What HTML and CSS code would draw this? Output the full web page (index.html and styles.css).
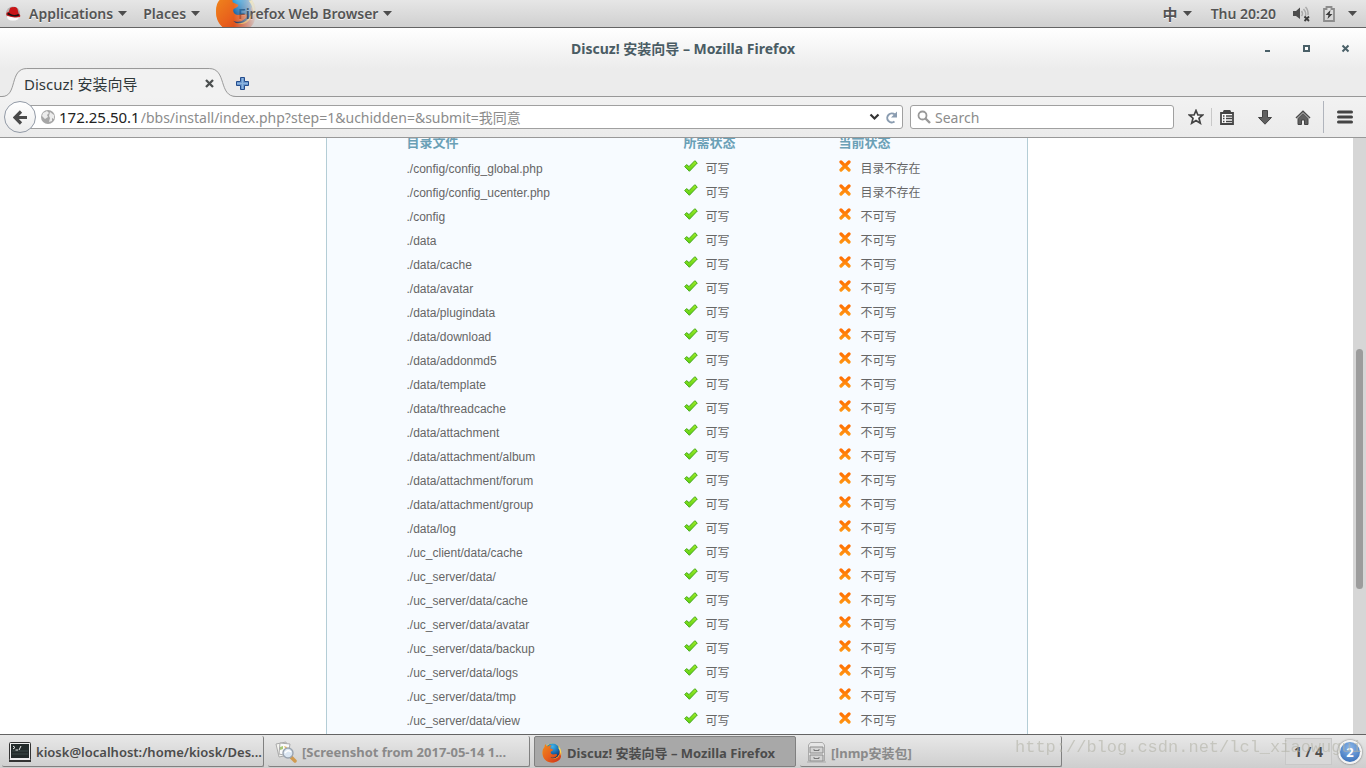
FILE: index.html
```html
<!DOCTYPE html>
<html lang="zh-CN">
<head>
<meta charset="utf-8">
<title>Discuz! 安装向导 - Mozilla Firefox</title>
<link rel="stylesheet" href="styles.css">
</head>
<body>
<svg class="defs" aria-hidden="true">
  <defs>
    <linearGradient id="gGreen" x1="0" y1="0" x2="0" y2="1"><stop offset="0" stop-color="#a0ec28"/><stop offset="1" stop-color="#5cd010"/></linearGradient>
    <linearGradient id="gOrange" gradientUnits="userSpaceOnUse" x1="0" y1="0" x2="0" y2="12"><stop offset="0" stop-color="#ff6a00"/><stop offset="1" stop-color="#ff9a14"/></linearGradient>
    <linearGradient id="gFox" x1="0" y1="0" x2="1" y2="1"><stop offset="0" stop-color="#f08a1c"/><stop offset=".5" stop-color="#e8601c"/><stop offset="1" stop-color="#c9301a"/></linearGradient>
    <linearGradient id="gTail" x1="0" y1="0" x2="0" y2="1"><stop offset="0" stop-color="#ffe24a"/><stop offset="1" stop-color="#f58a1c"/></linearGradient>
    <radialGradient id="gGlobe" cx=".5" cy=".2" r=".8"><stop offset="0" stop-color="#3fb4ea"/><stop offset=".5" stop-color="#1c70b4"/><stop offset="1" stop-color="#0b2a5c"/></radialGradient>
  </defs>
  <symbol id="ok" viewBox="0 0 14 12"><path d="M.7 6.6 2.6 4.6 5 6.6 10.8.7 13.3 3 5.4 11.3Z" fill="url(#gGreen)" stroke="#45a81c" stroke-linejoin="round"/></symbol>
  <symbol id="no" viewBox="0 0 12 12"><path d="M2 2 10 10M10 2 2 10" stroke="url(#gOrange)" stroke-width="3.2" stroke-linecap="round"/></symbol>
  <symbol id="down" viewBox="0 0 9 5"><path d="M0 0H9L4.5 5Z" fill="#4c4c4c"/></symbol>
  <symbol id="fox" viewBox="0 0 40 40">
    <circle cx="20" cy="20" r="19" fill="url(#gTail)"/>
    <circle cx="21" cy="16" r="15" fill="url(#gGlobe)"/>
    <path d="M5 8C5 5 6 3 7 2c1 3 3 4 5 5 2-2 5-3 7-2-2 2-3 4-2 6l5 2c1 1-1 3-4 4-1 1-1 3 1 5 3 2 6 0 9 0s3 3 0 5c-3 3-8 3-11 1 4 5 13 5 17-2 2-4 1-8 0-11 3 3 4 8 4 12-1 7-8 12-18 12C9 39 1 31 1 20 1 14 2 11 5 8Z" fill="url(#gFox)"/>
    <path d="M35 9c3 5 3 12 1 17 1-6 0-12-4-17Z" fill="#ffe86a"/>
  </symbol>
</svg>

<header class="panel">
  <nav class="panel-menus">
    <button class="menu menu-apps">
      <svg width="15" height="15" viewBox="0 0 15 15"><circle cx="7" cy="7.500" r="7" fill="#2a2020" opacity=".25"/><ellipse cx="7" cy="11" rx="6" ry="3.8" fill="#fafafa"/><path d="M.4 9C0 7 1 6 2.6 6L4 2.300C5 .6 7 1.600 8 1c2-.4 3 .6 3.600 2.200L12.600 7.400C14.600 8.600 14.800 10.300 13.600 11 10 12.200 2 10.800.4 9Z" fill="#c91517"/><path d="M2.800 6.600C5 9.400 9.400 9.600 12.400 8l1 1.600C9.500 11.500 3.500 9.800 1 8Z" fill="#151515"/></svg>
      <span>Applications</span><svg class="down"><use href="#down"/></svg>
    </button>
    <button class="menu menu-places"><span>Places</span><svg class="down"><use href="#down"/></svg></button>
    <button class="menu menu-app"><svg class="app-fox"><use href="#fox"/></svg><span class="app-name">Firefox Web Browser</span><svg class="down"><use href="#down"/></svg></button>
  </nav>
  <div class="panel-status">
    <button class="menu"><span class="cjk">中</span><svg class="down"><use href="#down"/></svg></button>
    <button class="menu clock">Thu 20:20</button>
    <button class="menu tray" aria-label="System">
      <svg width="17" height="16" viewBox="0 0 17 16"><path d="M0 5H3L7 1.500V13L3 10H0Z" fill="#4c4c4c"/><path d="M8.500 5q2 2.500 0 5M10.500 3q4 4.500 1 9M12.500 1q3 3 2.500 8" fill="none" stroke="#aaa" stroke-width="1.500"/><path d="M11.500 10.500 16 15M16 10.500 11.500 15" stroke="#3c3c3c" stroke-width="1.800"/></svg>
      <svg width="12" height="16" viewBox="0 0 12 16"><path d="M1 3H3.500V1H8.500V3H11V15H1Z" fill="none" stroke="#8c8c8c" stroke-width="1.800"/><path d="M7.500 4 2.500 9H5.500L4.500 13 9.500 8H6.700Z" fill="#3c3c3c"/></svg>
      <svg class="down"><use href="#down"/></svg>
    </button>
  </div>
</header>

<section class="chrome">
  <div class="titlebar">
    <h1>Discuz! 安装向导 – Mozilla Firefox</h1>
    <div class="win-buttons">
      <button aria-label="Minimize"><svg width="9" height="9"><path d="M2 7H7" stroke="#4a6068" stroke-width="2"/></svg></button>
      <button aria-label="Maximize"><svg width="9" height="9"><path d="M2 2H7V7H2Z" fill="#fff" stroke="#4a6068" stroke-width="2"/></svg></button>
      <button aria-label="Close"><svg width="9" height="9"><path d="M1.500 1.500 7.500 7.500M7.500 1.500 1.500 7.500" stroke="#4a6068" stroke-width="2"/></svg></button>
    </div>
  </div>
  <div class="tabs">
    <div class="tab">
      <svg class="tab-shape" viewBox="0 0 238 29" preserveAspectRatio="none"><path d="M0 28.500H2C18 28.500 9 1.500 27 1.500H211C229 1.500 222 28.500 238 28.500V29H0Z" fill="#f2f2f2"/><path d="M0 28.500H2C18 28.500 9 .5 27 .5H211C229 .5 220 28.500 238 28.500" fill="none" stroke="#989898"/></svg>
      <span class="tab-title">Discuz! 安装向导</span>
      <button class="tab-close" aria-label="Close tab"><svg width="9" height="9"><path d="M1 1 8 8M8 1 1 8" stroke="#4c5050" stroke-width="2.300"/></svg></button>
    </div>
    <button class="new-tab" aria-label="New tab"><svg width="13" height="13"><path d="M4.500.5H8.500V4.500H12.500V8.500H8.500V12.500H4.500V8.500H.5V4.500H4.500Z" fill="#6c9ad0" stroke="#244c8c"/><path d="M6.500 1V12M1 6.500H12" stroke="#8db4de"/></svg></button>
  </div>
</section>

<section class="toolbar">
  <div class="address">
    <button class="back" aria-label="Back"><svg width="15" height="15"><path d="M14 7.500H3M8 1.500 2 7.500 8 13.500" fill="none" stroke="#4a4a4a" stroke-width="3.200"/></svg></button>
    <svg width="14" height="14" class="globe"><circle cx="7" cy="7" r="7" fill="#a6a6a6"/><path d="M2 3 6 1 8 3 6 5 7 7 4 9 1 6ZM9 2 13 5 13 9 11 8 11 11 8 12 9 8 8 6Z" fill="#ececec"/></svg>
    <label for="url">172.25.50.1</label>
    <input id="url" type="text" value="/bbs/install/index.php?step=1&amp;uchidden=&amp;submit=我同意">
    <button aria-label="History"><svg width="11" height="8"><path d="M1.500 1.500 5.500 5.500 9.500 1.500" fill="none" stroke="#333" stroke-width="2.200"/></svg></button>
    <button aria-label="Reload"><svg width="13" height="13"><path d="M9.500 10.500A4.500 4.500 0 1 1 9.800 3.600" fill="none" stroke="#8a9cb0" stroke-width="2"/><path d="M12 .5V6.500H6Z" fill="#8a9cb0"/></svg></button>
  </div>
  <div class="search">
    <svg width="14" height="14"><circle cx="5.500" cy="5.500" r="4" fill="none" stroke="#999" stroke-width="1.800"/><path d="M8.500 8.500 13 13" stroke="#999" stroke-width="2.400"/></svg>
    <input type="search" aria-label="Search" placeholder="Search">
  </div>
  <div class="tools">
    <button class="t-star" aria-label="Bookmark"><svg width="16" height="16"><path d="M8 1.500 9.900 6H14.600L11 9.200 12.300 14.200 8 11.500 3.700 14.200 5 9.200 1.400 6H6.100Z" fill="#fafafa" stroke="#444" stroke-width="1.700"/></svg></button>
    <button class="t-list" aria-label="Bookmarks list"><svg width="14" height="15"><path d="M1 3H4V1.500H10V3H13V14H1Z" fill="#fafafa" stroke="#444" stroke-width="1.800"/><path d="M4 0H10V4H4Z" fill="#444"/><path d="M3 6H4.500M3 8.500H4.500M3 11.500H4.500M6 6H12M6 8.500H12M6 11.500H12" stroke="#444" stroke-width="1.300"/></svg></button>
    <button class="t-down" aria-label="Downloads"><svg width="14" height="15"><path d="M4.500.5H9.500V7.500H13.500L7 14.200.5 7.500H4.500Z" fill="#606060" stroke="#444"/></svg></button>
    <button class="t-home" aria-label="Home"><svg width="16" height="15"><path d="M3 8.500 8 3.500 13 8.500V14.500H9.500V10H6.500V14.500H3Z" fill="#606060" stroke="#444"/><path d="M1 8 8 1.200 15 8" fill="none" stroke="#4a4a4a" stroke-width="1.500"/></svg></button>
    <button class="t-menu" aria-label="Menu"><svg width="16" height="14"><path d="M1.500 2H14.500M1.500 7H14.500M1.500 12H14.500" stroke="#444" stroke-width="3" stroke-linecap="round"/></svg></button>
  </div>
</section>

<div class="viewport">
  <main class="page">
    <div class="card">
      <table>
        <colgroup><col class="c-file"><col class="c-need"><col></colgroup>
        <thead><tr><th>目录文件</th><th>所需状态</th><th>当前状态</th></tr></thead>
        <tbody>
          <tr><td>./config/config_global.php</td><td><svg class="ok"><use href="#ok"/></svg>可写</td><td><svg class="no"><use href="#no"/></svg>目录不存在</td></tr>
          <tr><td>./config/config_ucenter.php</td><td><svg class="ok"><use href="#ok"/></svg>可写</td><td><svg class="no"><use href="#no"/></svg>目录不存在</td></tr>
          <tr><td>./config</td><td><svg class="ok"><use href="#ok"/></svg>可写</td><td><svg class="no"><use href="#no"/></svg>不可写</td></tr>
          <tr><td>./data</td><td><svg class="ok"><use href="#ok"/></svg>可写</td><td><svg class="no"><use href="#no"/></svg>不可写</td></tr>
          <tr><td>./data/cache</td><td><svg class="ok"><use href="#ok"/></svg>可写</td><td><svg class="no"><use href="#no"/></svg>不可写</td></tr>
          <tr><td>./data/avatar</td><td><svg class="ok"><use href="#ok"/></svg>可写</td><td><svg class="no"><use href="#no"/></svg>不可写</td></tr>
          <tr><td>./data/plugindata</td><td><svg class="ok"><use href="#ok"/></svg>可写</td><td><svg class="no"><use href="#no"/></svg>不可写</td></tr>
          <tr><td>./data/download</td><td><svg class="ok"><use href="#ok"/></svg>可写</td><td><svg class="no"><use href="#no"/></svg>不可写</td></tr>
          <tr><td>./data/addonmd5</td><td><svg class="ok"><use href="#ok"/></svg>可写</td><td><svg class="no"><use href="#no"/></svg>不可写</td></tr>
          <tr><td>./data/template</td><td><svg class="ok"><use href="#ok"/></svg>可写</td><td><svg class="no"><use href="#no"/></svg>不可写</td></tr>
          <tr><td>./data/threadcache</td><td><svg class="ok"><use href="#ok"/></svg>可写</td><td><svg class="no"><use href="#no"/></svg>不可写</td></tr>
          <tr><td>./data/attachment</td><td><svg class="ok"><use href="#ok"/></svg>可写</td><td><svg class="no"><use href="#no"/></svg>不可写</td></tr>
          <tr><td>./data/attachment/album</td><td><svg class="ok"><use href="#ok"/></svg>可写</td><td><svg class="no"><use href="#no"/></svg>不可写</td></tr>
          <tr><td>./data/attachment/forum</td><td><svg class="ok"><use href="#ok"/></svg>可写</td><td><svg class="no"><use href="#no"/></svg>不可写</td></tr>
          <tr><td>./data/attachment/group</td><td><svg class="ok"><use href="#ok"/></svg>可写</td><td><svg class="no"><use href="#no"/></svg>不可写</td></tr>
          <tr><td>./data/log</td><td><svg class="ok"><use href="#ok"/></svg>可写</td><td><svg class="no"><use href="#no"/></svg>不可写</td></tr>
          <tr><td>./uc_client/data/cache</td><td><svg class="ok"><use href="#ok"/></svg>可写</td><td><svg class="no"><use href="#no"/></svg>不可写</td></tr>
          <tr><td>./uc_server/data/</td><td><svg class="ok"><use href="#ok"/></svg>可写</td><td><svg class="no"><use href="#no"/></svg>不可写</td></tr>
          <tr><td>./uc_server/data/cache</td><td><svg class="ok"><use href="#ok"/></svg>可写</td><td><svg class="no"><use href="#no"/></svg>不可写</td></tr>
          <tr><td>./uc_server/data/avatar</td><td><svg class="ok"><use href="#ok"/></svg>可写</td><td><svg class="no"><use href="#no"/></svg>不可写</td></tr>
          <tr><td>./uc_server/data/backup</td><td><svg class="ok"><use href="#ok"/></svg>可写</td><td><svg class="no"><use href="#no"/></svg>不可写</td></tr>
          <tr><td>./uc_server/data/logs</td><td><svg class="ok"><use href="#ok"/></svg>可写</td><td><svg class="no"><use href="#no"/></svg>不可写</td></tr>
          <tr><td>./uc_server/data/tmp</td><td><svg class="ok"><use href="#ok"/></svg>可写</td><td><svg class="no"><use href="#no"/></svg>不可写</td></tr>
          <tr><td>./uc_server/data/view</td><td><svg class="ok"><use href="#ok"/></svg>可写</td><td><svg class="no"><use href="#no"/></svg>不可写</td></tr>
        </tbody>
      </table>
    </div>
  </main>
  <div class="scrollbar"><div class="scroll-before"></div><div class="scroll-thumb"></div><div class="scroll-after"></div></div>
</div>

<footer class="taskbar">
  <button class="task task-term">
    <svg width="22" height="20" viewBox="0 0 22 20"><rect x=".5" y=".5" width="21" height="18" rx="1" fill="#eee" stroke="#333"/><rect x="2" y="2" width="18" height="14" fill="#232b2b"/><path d="M3 9H19M3 12H19" stroke="#3c4a48"/><path d="M4 4 6 5.500 4 7M6.500 8H9M10 8 12 4" fill="none" stroke="#eee"/><path d="M0 19H22" stroke="#333" stroke-width="2"/></svg>
    <span>kiosk@localhost:/home/kiosk/Des...</span>
  </button>
  <button class="task task-min">
    <svg width="22" height="22" viewBox="0 0 22 22"><path d="M1 3 11 1 14 14 4 16Z" fill="#f4f4f0" stroke="#aaa"/><path d="M5 2 15 3 13 15 4 13Z" fill="#fafafa" stroke="#aaa"/><path d="M5 6 8 5 8 8 5 9Z" fill="#a8c878"/><path d="M9 5 12 6 11 9Z" fill="#e8b860"/><path d="M16 16 20 20" stroke="#d09a50" stroke-width="3.500" stroke-linecap="round"/><circle cx="13" cy="12" r="5" fill="#dbe6f2" stroke="#9aa4b0" stroke-width="1.400"/><path d="M10 12q3-4 6-1" stroke="#fff" fill="none" stroke-width="1.500"/></svg>
    <span>[Screenshot from 2017-05-14 1...</span>
  </button>
  <button class="task task-active">
    <svg width="20" height="20"><use href="#fox"/></svg>
    <span>Discuz! 安装向导 – Mozilla Firefox</span>
  </button>
  <button class="task task-min">
    <svg width="19" height="21" viewBox="0 0 19 21"><path d="M1.500 19V3L3.500.5H15.500L17.500 3V19Z" fill="#e6e6e6" stroke="#aaa"/><path d="M3 5H16V11H3ZM3 13H16V19H3Z" fill="#d4d4d4" stroke="#8c8c8c"/><path d="M7 7V8.500H12V7M7 15V16.500H12V15" fill="none" stroke="#777"/><path d="M0 20H19" stroke="#aaa"/></svg>
    <span>[lnmp安装包]</span>
  </button>
  <div class="tail">
    <button class="pager">1 / 4</button>
    <button class="badge">2</button>
  </div>
  <div class="watermark">http://blog.csdn.net/lcl_xiaowugui</div>
</footer>
</body>
</html>
```
FILE: styles.css
```css
* { box-sizing: border-box; }
body {
  margin: 0;
  height: 100vh;
  display: flex;
  flex-direction: column;
  overflow: hidden;
  background: #fff;
  font-family: "Noto Sans", "Noto Sans CJK SC", sans-serif;
  font-size: 14px;
}
.defs { position: absolute; width: 0; height: 0; }
svg { flex: none; display: block; }
button {
  display: flex;
  align-items: center;
  justify-content: center;
  margin: 0;
  padding: 0;
  border: 0;
  background: none;
  font: inherit;
  color: inherit;
}
input {
  min-width: 0;
  padding: 0;
  border: 0;
  outline: 0;
  background: none;
  font: inherit;
}

/* desktop panel */
.panel {
  flex: none;
  display: flex;
  justify-content: space-between;
  height: 28px;
  padding: 0 9px 0 6px;
  border-bottom: 1px solid #646464;
  background: linear-gradient(#e6e6e6, #d0d0d0);
  color: #545454;
  font-weight: 600;
  font-size: 14px;
}
.panel-menus, .panel-status { display: flex; }
.menu { gap: 5px; text-shadow: 0 1px #f4f4f4; }
.menu-apps svg:first-child { margin-right: 3px; }
.menu-places { margin-left: 16px; }
.menu-app { margin-left: 15px; overflow: hidden; }
.app-fox {
  width: 42px;
  height: 42px;
  margin-right: -24px;
  margin-bottom: 4px;
  -webkit-mask-image: linear-gradient(to right, #000 45%, transparent);
  mask-image: linear-gradient(to right, #000 45%, transparent);
}
.down { width: 9px; height: 5px; }
.clock { margin-left: 19px; }
.tray { margin-left: 17px; gap: 13px; }
.cjk { font-size: 15px; }

/* window title and tab strip */
.chrome {
  flex: none;
  border-bottom: 1px solid #989898;
  background: linear-gradient(#fff, #ececec 60%);
}
.titlebar {
  display: grid;
  grid-template-columns: 1fr auto 1fr;
  align-items: center;
  height: 40px;
  padding: 0 16px;
}
.titlebar h1 {
  grid-column: 2;
  margin: 0;
  color: #4a5c64;
  font-size: 14px;
  font-weight: 700;
}
.win-buttons { display: flex; justify-content: flex-end; gap: 30px; }
.tabs { display: flex; align-items: center; height: 28px; }
.tab {
  position: relative;
  display: flex;
  align-items: center;
  justify-content: space-between;
  width: 236px;
  height: 28px;
  padding: 3px 22px 0 24px;
  color: #30383a;
  font-size: 15px;
}
.tab-shape { position: absolute; left: 0; top: 0; width: 100%; height: 29px; }
.tab-title, .tab-close { position: relative; }
.new-tab { padding-top: 2px; }

/* navigation bar */
.toolbar {
  flex: none;
  display: flex;
  align-items: center;
  height: 41px;
  padding: 0 13px 0 4px;
  border-bottom: 1px solid #989898;
  background: linear-gradient(#f2f2f2, #ebebeb);
}
.address, .search {
  display: flex;
  align-items: center;
  height: 24px;
  border: 1px solid #a0a0a0;
  border-radius: 3px;
  background: #fff;
}
.address { flex: 1; margin-left: 12px; padding-right: 4px; gap: 5px; }
.address .back {
  width: 32px;
  height: 32px;
  margin-left: -13px;
  border: 1px solid #929aa6;
  border-radius: 50%;
  background: linear-gradient(#fff, #ececec);
}
.address label { color: #222; font-size: 15px; }
.address input { flex: 1; margin-left: -4px; color: #8c8c8c; }
.globe { margin-right: -1px; }
.search { width: 264px; margin-left: 7px; padding: 0 6px; gap: 4px; }
.search input { flex: 1; }
.search input::placeholder { color: #8c8c8c; opacity: 1; }
.tools { display: flex; align-items: center; }
.t-star { margin-left: 14px; }
.t-list { height: 18px; margin-left: 7px; padding-left: 8px; border-left: 1px solid #c8c8c8; }
.t-down { margin-left: 24px; }
.t-home { margin-left: 23px; }
.t-menu { height: 32px; margin-left: 12px; padding-left: 13px; border-left: 1px solid #b0b4bc; }

/* installer page */
.viewport { flex: 1; min-height: 0; display: flex; }
.page { flex: 1; display: flex; justify-content: center; overflow: hidden; }
.card {
  width: 702px;
  padding-left: 80px;
  border: solid #b4cdd6;
  border-width: 0 1px;
  background: #f7fbff;
}
.card table {
  width: 100%;
  margin-top: -6px;
  border-collapse: collapse;
  table-layout: fixed;
  color: #666;
  font-family: "Liberation Sans", "Noto Sans CJK SC", sans-serif;
  font-size: 12px;
}
.c-file { width: 277px; }
.c-need { width: 155px; }
.card th, .card td { height: 24px; padding: 0; text-align: left; white-space: nowrap; }
.card th { padding-bottom: 2px; color: #6aa0b6; font-size: 13px; line-height: 20px; }
.card td { padding-top: 2px; line-height: 22px; }
.card td svg { display: inline-block; height: 12px; vertical-align: 1px; }
.ok { width: 14px; margin-right: 8px; }
.no { width: 12px; margin-right: 10px; }
.scrollbar {
  display: flex;
  flex-direction: column;
  width: 13px;
  padding: 0 3px;
  background: #d6d6d6;
}
.scroll-before { flex: 211; }
.scroll-thumb { flex: 240; border-radius: 4px; background: #9c9c9c; }
.scroll-after { flex: 145; }

/* window list */
.taskbar {
  position: relative;
  flex: none;
  display: flex;
  align-items: center;
  gap: 4px;
  height: 34px;
  padding: 0 4px 0 2px;
  border-top: 1px solid #646464;
  background: linear-gradient(#e8e8e8, #cecece);
  color: #4c4c4c;
  font-size: 13px;
  font-weight: 700;
}
.task {
  flex: 0 1 262px;
  justify-content: flex-start;
  gap: 5px;
  height: 31px;
  padding: 2px 0 0 7px;
  border: solid #808080;
  border-width: 0 1px 1px 0;
  border-radius: 2px;
  white-space: nowrap;
  overflow: hidden;
}
.task-term { font-weight: 600; }
.task-min { color: #8a8a8a; }
.task-active { border: 1px solid #808080; background: #a8a8a8; }
.tail { display: flex; align-items: center; gap: 6px; margin-left: auto; }
.pager {
  width: 47px;
  height: 27px;
  border: 1px solid #c8c8c8;
  background: #d8d8d8;
  font-size: 14px;
}
.badge {
  width: 24px;
  height: 24px;
  border: 2px solid #f4f4f4;
  border-radius: 50%;
  background: radial-gradient(circle at 50% 30%, #8cb8ec, #2c64b0);
  box-shadow: 0 0 2px #555;
  color: #fff;
}
.watermark {
  position: absolute;
  left: 1015px;
  top: 3px;
  color: #b4b4a8;
  font-family: "Liberation Mono", monospace;
  font-size: 17px;
  font-weight: 400;
  opacity: .6;
  pointer-events: none;
}
```
